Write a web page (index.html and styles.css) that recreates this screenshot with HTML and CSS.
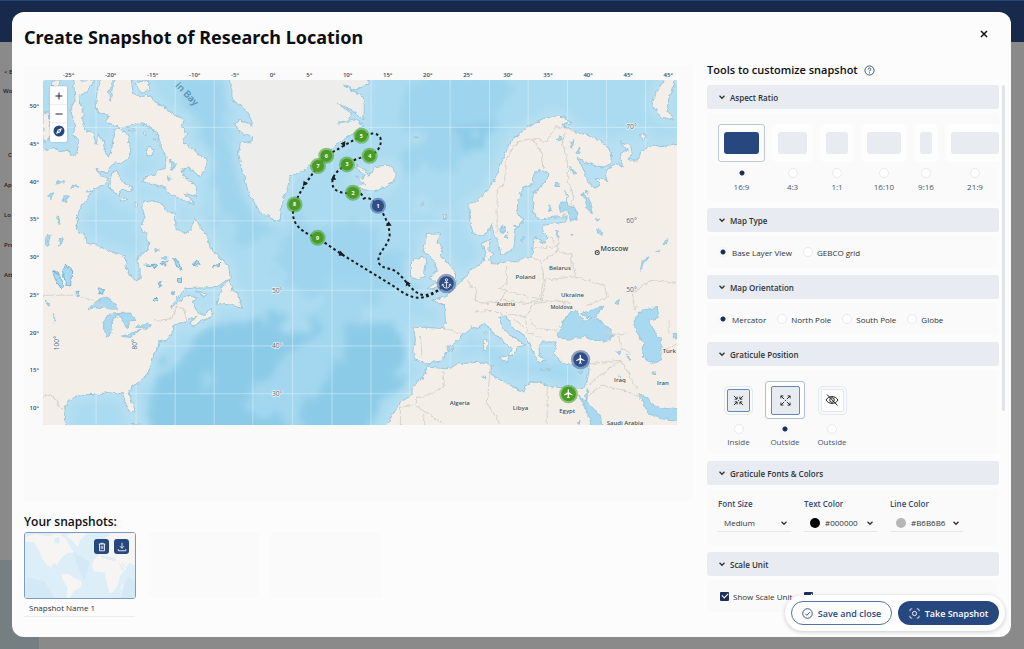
FILE: index.html
```html
<!DOCTYPE html>
<html lang="en">
<head>
<meta charset="utf-8">
<title>Create Snapshot of Research Location</title>
<link rel="stylesheet" href="styles.css">
</head>
<body>
<svg class="defs" aria-hidden="true">
  <symbol id="chev" viewBox="0 0 8 8"><path d="M1.5 2.8 4 5.3 6.500 2.800" fill="none" stroke="currentColor" stroke-width="1.300"/></symbol>
  <symbol id="plane" viewBox="0 0 24 24"><path fill="#fff" d="M21 16v-2l-8-5V3.500a1.500 1.500 0 0 0-3 0V9l-8 5v2l8-2.500V19l-2 1.500V22l3.500-1 3.500 1v-1.500L13 19v-5.500z"/></symbol>
</svg>

<div class="page">
  <header class="topbar"></header>
  <nav class="sidebar">
    <span>&lt; B</span><span>Wo</span><span class="far">C</span><span>Ap</span><span>Lo</span><span>Pro</span><span>Att</span>
  </nav>
  <div class="sidefoot"></div>
</div>

<main class="modal" role="dialog" aria-labelledby="title">
  <header class="modal-head">
    <h1 id="title">Create Snapshot of Research Location</h1>
    <button class="close" aria-label="Close"><svg viewBox="0 0 8 8"><path d="M1 1l6 6M7 1L1 7" stroke="#111" stroke-width="1.500"/></svg></button>
  </header>

  <div class="columns">
    <section class="left">
      <div class="stage">
        <div class="lon"><span>-25°</span><span>-20°</span><span>-15°</span><span>-10°</span><span>-5°</span><span>0°</span><span>5°</span><span>10°</span><span>15°</span><span>20°</span><span>25°</span><span>30°</span><span>35°</span><span>40°</span><span>45°</span><span>45°</span></div>
        <div class="lat"><span>50°</span><span>45°</span><span>40°</span><span>35°</span><span>30°</span><span>25°</span><span>20°</span><span>15°</span><span>10°</span></div>
        <div class="map">
          <svg class="chart" viewBox="9 30 1900 1035" role="img" aria-label="Map of the North Atlantic with the cruise track">
            <defs>
              <filter id="rough" x="-5%" y="-5%" width="110%" height="110%"><feTurbulence type="fractalNoise" baseFrequency="0.07" numOctaves="2" seed="4"/><feDisplacementMap in="SourceGraphic" scale="14" xChannelSelector="R" yChannelSelector="G"/></filter>
              <filter id="soft" x="-20%" y="-20%" width="140%" height="140%"><feGaussianBlur stdDeviation="14"/></filter>
              <filter id="deep" x="-20%" y="-20%" width="140%" height="140%"><feTurbulence type="fractalNoise" baseFrequency="0.012" numOctaves="4" seed="9"/><feDisplacementMap in="SourceGraphic" scale="130" xChannelSelector="R" yChannelSelector="G"/><feGaussianBlur stdDeviation="11"/></filter>
              <g id="land">
                <path d="M9 240 40 232 60 245 85 240 90 255 105 258 112 240 118 215 100 195 105 160 90 120 105 90 100 30H165L140 68 120 75 118 100 130 110 128 150 140 185 160 190 168 222 175 195 190 215 195 245 205 260 215 235 222 180 235 175 250 182 268 195 265 215 272 240 265 265 240 282 225 275 212 290 202 310 168 298 185 318 205 325 190 345 165 355 150 368 145 385 125 405 112 440 112 480 135 495 137 518 170 525 215 545 255 557 260 600 275 620 290 635 300 625 300 600 290 570 300 555 322 540 326 520 318 490 303 475 305 460 315 440 305 410 310 390 340 395 360 395 385 425 405 430 408 475 435 490 450 480 465 445 485 475 500 495 510 530 545 570 565 585 570 625 545 640 530 652 440 655 420 672 400 700 393 715 420 690 445 675 470 680 460 695 470 725 490 733 515 715 518 725 505 745 480 755 460 770 450 760 470 738 440 752 415 760 400 765 395 790 380 810 355 815 355 830 340 855 335 880 325 905 310 925 275 950 268 975 278 1000 285 1020 270 1030 257 1000 253 985 245 965 225 970 200 965 175 975 150 972 110 978 85 990 75 1010 78 1075H-5V240Z"/>
                <path d="M9 125 28 130 32 195 20 215 9 212ZM35 30H60L55 60 40 70Z"/>
                <path d="M190 20 172 55 168 90 170 125 205 140 192 155 225 165 240 175 300 160 320 165 340 180 360 205 360 230 378 255 375 295 355 300 345 315 315 320 308 335 345 343 375 355 395 375 440 395 465 405 435 370 470 380 468 350 420 305 445 290 480 322 500 285 500 265 475 255 460 240 430 215 440 190 425 170 432 150 415 140 390 125 370 110 345 95 325 75 300 80 280 70 272 20H228L218 50 210 95 206 70 222 20Z"/>
                <path d="M284 38 325 30 330 62 300 66ZM215 310 230 300 245 335 280 355 265 362 245 360 235 375 205 350ZM240 395 252 383 262 385 250 396ZM284 396H292V410H286ZM318 240 330 228 342 240 335 257 322 256ZM268 177H285V182H268ZM310 185H318V195H310ZM340 205 358 208 350 215Z"/>
                <path d="M528 700 545 650 568 630 575 660 595 670 605 715 580 705ZM468 662 500 672 490 678Z"/>
                <path d="M945 320 970 325 975 310 945 295 950 285 975 300 985 318 1005 290 1040 285 1055 290 1067 315 1055 340 1035 350 1005 365 970 358 950 353 972 340Z"/>
                <path d="M1160 490 1198 488 1190 515 1206 530 1200 555 1225 580 1245 610 1246 632 1232 645 1200 652 1160 658 1190 635 1168 625 1190 600 1180 570 1165 555 1148 545ZM1110 620 1110 580 1125 565 1145 558 1158 570 1152 615 1130 628ZM1142 399H1150V407H1142ZM1120 202 1135 200 1125 206ZM1210 435H1216V445H1210Z"/>
                <path d="M1875 20 1840 80 1837 110 1860 140 1900 150 1880 120 1885 80 1900 45 1905 20ZM1798 200 1808 190 1817 200 1808 212Z"/>
                <path d="M1285 400 1305 395 1345 360 1370 310 1390 260 1410 215 1450 180 1500 150 1540 138 1570 140 1590 158 1565 165 1590 180 1640 195 1690 220 1713 250 1710 280 1680 293 1630 275 1610 262 1625 290 1638 320 1640 335 1665 355 1678 345 1665 325 1690 325 1700 335 1695 315 1700 295 1725 280 1745 290 1740 250 1760 240 1740 215 1770 225 1775 250 1760 270 1790 270 1805 240 1840 225 1860 230 1930 215V1085H1030L1055 1035 1080 995 1115 975 1115 950 1150 920 1160 890 1220 895 1255 880 1330 875 1355 885 1350 910 1380 930 1420 950 1450 965 1460 940 1490 932 1522 948 1565 952 1600 955 1635 950 1645 905 1645 875 1605 885 1560 875 1540 850 1545 830 1550 815 1510 815 1495 820 1497 855 1515 870 1495 880 1480 850 1465 815 1450 795 1410 765 1395 735 1375 740 1380 765 1410 795 1455 825 1430 830 1425 850 1405 860 1415 835 1390 815 1355 785 1335 760 1310 775 1295 770 1250 810 1225 830 1205 872 1180 875 1160 885 1150 875 1125 870 1117 840 1125 810 1120 775 1140 770 1210 775 1215 755 1212 705 1175 690 1215 680 1240 655 1260 635 1280 615 1290 600 1325 580 1335 555 1325 520 1350 505 1345 540 1360 550 1345 570 1360 582 1395 575 1425 575 1460 562 1475 565 1477 540 1478 520 1485 500 1510 520 1525 500 1508 488 1507 480 1510 465 1575 455 1580 440 1550 440 1495 447 1480 430 1478 385 1485 365 1522 325 1525 310 1500 300 1480 310 1478 340 1450 350 1432 390 1430 430 1450 450 1425 480 1420 535 1395 553 1380 550 1375 520 1360 490 1352 460 1345 480 1320 497 1298 490 1288 455Z"/>
                <path d="M1375 860 1405 857 1400 878ZM1328 810H1342V838H1330ZM1330 788 1338 780V800ZM1500 895H1528V899H1500ZM1610 905 1628 900 1620 908ZM1225 840 1240 832 1235 840ZM1440 510 1450 500 1445 518ZM270 1062 300 1060 300 1066Z"/>
              </g>
              <path id="greenland" d="M563 20 575 50 575 90 600 105 625 130 637 165 600 150 585 162 600 190 637 200 635 212 600 220 595 250 605 300 615 330 625 370 650 410 662 432 690 440 705 455 720 448 725 400 740 360 750 320 790 300 815 285 840 265 870 240 900 215 940 190 972 165 945 150 890 160 925 148 935 130 890 100 935 120 970 150 972 110 968 80 910 45 945 60 985 42V20Z"/>
            </defs>
            <rect x="0" y="0" width="1920" height="1080" fill="#abdbf0"/>
            <g filter="url(#deep)">
              <path fill="#9ed4ed" d="M400 30H560L590 240 700 480 600 520 530 430 510 260ZM1090 30H1420L1290 260 1240 300 1080 330ZM730 480 900 430 1110 560 1100 640 950 700 700 640Z"/>
              <path fill="#8ccbe7" d="M390 860 520 800 600 740 760 760 860 720 1000 760 1110 800 1080 930 960 1120H340L320 1000ZM1230 160H1360L1300 270Z"/>
              <path fill="#a3d7ef" d="M760 1080 900 860 960 650 900 640 760 850 620 1000ZM480 920 530 900 520 980Z"/>
              <path fill="#8ccbe7" d="M970 920 1080 830 1090 900 970 1010Z"/>
            </g>
            <g fill="none" stroke="#b9e0f2" stroke-width="34" stroke-linejoin="round" filter="url(#soft)"><use href="#land"/><use href="#greenland"/></g>
            <g fill="#a6d9f1" filter="url(#soft)"><path d="M1270 800 1420 860 1490 920 1620 930 1600 890 1500 870 1380 900Z"/></g>
            <path d="M168 30V1065M288 30V1065M405 30V1065M522 30V1065M638 30V1065M757 30V1065M875 30V1065M992 30V1065M1108 30V1065M1229 30V1065M1347 30V1065M1463 30V1065M1581 30V1065M1698 30V1065M1815 30V1065M9 172H1909M9 452H1909M9 660H1909M9 827H1909M9 970H1909" fill="none" stroke="#e2f4fc" stroke-opacity=".6" stroke-width="2.500"/>
            <g filter="url(#rough)" stroke="#9cc8dc" stroke-width="3" stroke-linejoin="round">
              <g fill="#f3efe8"><use href="#land"/></g>
              <use href="#greenland" fill="#edeeec"/>
              <g fill="#a8d9f0">
                <path d="M1550 795 1565 760 1590 725 1605 720 1630 750 1670 745 1700 770 1718 795 1700 812 1660 810 1630 798 1580 810 1555 802ZM1622 730 1690 708 1662 742 1640 742Z"/>
                <path d="M1780 750 1805 720 1850 712 1855 740 1825 750 1845 790 1862 810 1860 870 1830 878 1805 860 1810 820 1785 780Z"/>
                <path d="M1612 975 1645 1000 1680 1040 1685 1080H1660L1635 1010ZM1635 970 1642 955 1638 1000ZM1795 970 1820 980 1835 1005 1880 1015 1925 1010V1050L1860 1045 1825 1030 1810 1005Z"/>
                <path d="M145 715 180 685 200 680 230 705 232 720 190 712ZM195 790 192 750 205 732 235 730 215 755 212 790 200 800ZM235 730 270 728 290 750 265 752 262 778 245 745ZM245 798 300 780 270 802ZM285 770 330 760 325 775Z"/>
                <path stroke="#7fb4cf" d="M78 585 95 600 92 650 80 645 65 600ZM38 600 55 610 70 650 60 652 42 620ZM177 657 190 655 188 672 178 668ZM105 668 120 665 115 678ZM315 585 345 582 355 592 320 592ZM360 580 385 572 375 585ZM400 565 420 578 425 600 410 590ZM457 582 470 570 480 585ZM355 640 365 635 360 652ZM340 685H352V692H340ZM520 590 540 578 535 590ZM395 665H402V672H395ZM412 625H424V640H412Z"/>
                <path d="M388 268 408 280 395 302ZM382 315 395 325 385 335ZM24 375 40 368 35 388ZM50 335H72V339H50ZM95 345 120 350 95 352ZM140 362 158 363 140 366ZM70 380H82V390H70ZM55 435 60 460 52 455ZM20 490 30 500 22 528 15 520ZM62 505 70 510 55 528ZM40 730 46 750 42 755ZM345 535 355 540 345 542ZM365 560H380V566H365ZM15 690 32 702 28 706Z"/>
                <path d="M1548 208 1560 195 1565 210 1552 212ZM1588 215 1600 212 1595 235ZM1605 250 1618 235 1615 250ZM1588 290 1608 310 1600 312ZM1580 415 1600 410 1612 430 1605 448 1590 450ZM1555 405 1575 395 1580 380 1582 415 1560 428ZM1545 340H1555V346H1545ZM1525 405H1531V424H1525ZM1572 365 1582 380ZM1632 375 1645 385 1655 430 1640 420ZM1622 368H1630V374H1622ZM1635 358 1645 368 1635 370ZM1668 475 1680 480 1685 495 1672 490ZM1378 480 1390 465 1395 480 1382 492ZM1420 465 1438 467 1425 472ZM1395 500 1402 485 1398 505ZM1548 478 1556 500 1550 502ZM1592 490H1600V494H1592ZM1668 446H1676V452H1668ZM1800 600 1805 570 1825 560 1810 580ZM1845 545 1858 542 1855 548ZM1865 520 1882 508 1878 520ZM1722 698 1740 685 1730 702ZM1728 845 1740 842 1738 852ZM1760 850 1768 870 1760 865ZM1835 905H1842V913H1835ZM1735 910 1740 922ZM1898 790 1909 790V802L1898 800ZM1325 918H1333V922H1325ZM1610 1060 1618 1050 1616 1065Z"/>
              </g>
            </g>
            <g fill="none" stroke="#d6d3cc" stroke-width="3" filter="url(#rough)">
              <path d="M9 675H105L140 685 235 725M345 752 395 745 410 708 430 715 440 750M9 980 35 973 60 1010 78 1026"/>
              <path d="M1370 490 1370 360 1392 340 1395 270 1430 215 1475 205 1505 250 1510 295M1475 205 1520 215 1545 170 1580 175 1565 215 1580 270 1582 330 1600 380 1565 445M1580 175 1595 185M1480 535 1550 530 1555 500M1555 545 1590 550 1592 590M1510 570 1555 540 1530 500M1395 585 1400 640 1375 655 1410 665 1460 680 1500 685 1510 620 1500 570 1480 565M1500 630 1605 620 1590 550M1605 620 1690 645 1700 680 1640 705M1515 630 1505 690 1460 700 1380 690M1300 690 1340 700 1380 690 1400 660M1300 725 1355 720 1395 735M1300 690 1310 660 1275 630M1210 775 1260 790M1140 795 1145 860M1400 730 1455 740 1480 700 1560 690 1590 720M1455 740 1460 790 1500 800M1470 750 1490 775 1550 780M1420 745 1450 770M1590 700 1560 690M1690 785 1735 795 1760 790M1735 800 1740 830 1770 850M1785 720 1775 670 1830 630 1909 640M1885 750V790M1860 850 1909 820M1645 880 1740 870 1770 920 1790 960M1645 940 1740 870M1640 980 1680 945 1750 960 1800 980M1520 950V1065M1350 885 1340 1000 1380 1060M1205 885 1212 950 1160 975 1125 985M1125 1005 1080 1010V1065M1125 1005 1230 1075M1150 1030V1065M1125 985V1005"/>
            </g>
            <path fill="none" stroke="#1c1c1c" stroke-width="6" stroke-dasharray="8 8" d="M1218 640C1190 660 1180 672 1150 675 1110 668 1095 620 1060 600 1035 590 1010 595 1015 560 1025 535 1048 520 1048 490 1045 460 1030 430 1013 407 1000 390 985 380 970 385 965 370 955 360 938 368 910 372 880 365 877 345 872 320 890 300 920 283 940 268 960 262 988 257 1015 245 1025 225 1020 203 1010 185 990 190 963 197L858 257 833 288C800 335 780 360 763 403 750 440 760 480 832 503L905 553 1060 648C1110 685 1150 705 1218 640"/>
            <path fill="#1c1c1c" d="M899 541 914 556 895 557ZM790 332 788 348 803 341ZM1045 453 1036 467 1054 467ZM879 315 872 330 888 329ZM915 213 901 220 914 230ZM1098 632 1096 648 1111 640Z"/>
            <g class="place">
              <text x="1455" y="626" text-anchor="middle">Poland</text><text x="1558" y="599" text-anchor="middle">Belarus</text><text x="1596" y="680" text-anchor="middle">Ukraine</text>
              <text x="1396" y="708" text-anchor="middle" class="small">Austria</text><text x="1563" y="716" text-anchor="middle" class="small">Moldova</text>
              <text x="1738" y="936" text-anchor="middle">Iraq</text><text x="1867" y="944" text-anchor="middle">Iran</text><text x="1866" y="848">Turk</text>
              <text x="1258" y="1004" text-anchor="middle">Algeria</text><text x="1440" y="1018" text-anchor="middle">Libya</text><text x="1580" y="1027" text-anchor="middle">Egypt</text><text x="1753" y="1063" text-anchor="middle">Saudi Arabia</text>
              <text x="1680" y="541" class="city">Moscow</text>
            </g>
            <circle cx="1670" cy="547" r="6" fill="#fff" stroke="#444" stroke-width="3"/><circle cx="1670" cy="547" r="2.500" fill="#444"/>
            <g class="deg"><text x="1757" y="178">70°</text><text x="1757" y="460">60°</text><text x="1757" y="666">50°</text><text x="695" y="667">50°</text><text x="695" y="834">40°</text><text x="695" y="977">30°</text><text transform="translate(58 840) rotate(-90)">100°</text><text transform="translate(292 838) rotate(-90)">80°</text></g>
            <text class="bay" transform="translate(404 48) rotate(46)">in Bay</text>
            <g class="stops">
              <g class="halo"><circle cx="938" cy="368" r="24"/><circle cx="920" cy="283" r="24"/><circle cx="988" cy="257" r="24"/><circle cx="963" cy="197" r="24"/><circle cx="858" cy="257" r="24"/><circle cx="833" cy="288" r="24"/><circle cx="763" cy="403" r="24"/><circle cx="832" cy="503" r="24"/><circle cx="1584" cy="971" r="28"/></g>
              <g class="core"><circle cx="938" cy="368" r="18"/><circle cx="920" cy="283" r="18"/><circle cx="988" cy="257" r="18"/><circle cx="963" cy="197" r="18"/><circle cx="858" cy="257" r="18"/><circle cx="833" cy="288" r="18"/><circle cx="763" cy="403" r="18"/><circle cx="832" cy="503" r="18"/><circle cx="1584" cy="971" r="22"/></g>
              <g class="halo navy"><circle cx="1013" cy="407" r="24"/><circle cx="1218" cy="640" r="29"/><circle cx="1620" cy="868" r="29"/></g>
              <g class="core navy"><circle cx="1013" cy="407" r="18"/><circle cx="1218" cy="640" r="22"/><circle cx="1620" cy="868" r="22"/></g>
              <g class="num"><text x="1013" y="413">1</text><text x="938" y="374">2</text><text x="920" y="289">3</text><text x="988" y="263">4</text><text x="963" y="203">5</text><text x="858" y="263">6</text><text x="833" y="294">7</text><text x="763" y="409">8</text><text x="832" y="509">9</text></g>
              <use href="#plane" x="1604" y="851" width="32" height="32"/><use href="#plane" x="1568" y="954" width="32" height="32"/>
              <path d="M1218 632V652M1212 637H1224M1207 643C1207 657 1229 657 1229 643M1204 646 1207 641 1211 646M1225 646 1229 641 1232 646" fill="none" stroke="#fff" stroke-width="2.500"/><circle cx="1218" cy="629" r="3.500" fill="none" stroke="#fff" stroke-width="2.500"/>
            </g>
          </svg>
          <div class="zoomer">
            <button aria-label="Zoom in"><svg viewBox="0 0 8 8"><path d="M4 .5V7.500M.5 4H7.500"/></svg></button>
            <button aria-label="Zoom out"><svg viewBox="0 0 8 8"><path d="M.5 4H7.500"/></svg></button>
            <button aria-label="Reset north"><svg class="compass" viewBox="0 0 12 12"><circle cx="6" cy="6" r="5.500"/><path d="M9 3 7.300 7.300 3 9 4.700 4.700Z"/><circle class="dot" cx="6" cy="6" r=".8"/></svg></button>
          </div>
        </div>
      </div>

      <h2 class="snaps-title">Your snapshots:</h2>
      <div class="snaps">
        <div class="snap">
          <div class="thumb">
            <svg class="world" viewBox="0 0 112 67" preserveAspectRatio="none">
              <rect width="112" height="67" fill="#dceef7"/>
              <path fill="#d3e9f5" d="M2 45 20 50 30 67H0ZM50 20 66 30 60 50 52 30ZM104 45 112 50V67H98Z"/>
              <path fill="#f6f5f3" stroke="#e4ecef" stroke-width=".4" d="M0 4 10 1 24 3 34 0 42 6 46 14 50 20 43 21 37 26 34 31 33 34 29 31 27 35 31 38 35 40 38 42 45 42 50 46 58 50 57 56 50 60 46 67H42L43 56 38 48 37 41 30 38 22 33 17 26 14 18 9 10 0 9ZM40 2 52 0H64L56 8 54 15 48 8ZM70 27 75 23 72 17 78 14 79 8 88 0H112V34L106 31 103 36 99 30 100 34 104 36 97 44 95 53 90 61 86 62 82 47 81 41 70 40 68 33ZM73 9 77 7 76 14 72 15ZM98 53 100 50 99 59 97 58Z"/>
              <path fill="#dceef7" d="M78 22 84 24 92 26 92 29 84 27 77 25ZM93 19 98 19 98 22 92 21ZM30 6 35 4 35 11 30 10ZM95 29 101 38 99 39Z"/>
            </svg>
            <div class="thumb-actions">
              <button aria-label="Delete snapshot"><svg viewBox="0 0 12 12"><path d="M2 2.500H10M4.500 2.500V1.500H7.500V2.500M3 2.500V10.500H9V2.500M5 4.500V8.500M7 4.500V8.500"/></svg></button>
              <button aria-label="Download snapshot"><svg viewBox="0 0 12 12"><path d="M6 1V7.500M3.500 5 6 7.500 8.500 5M1.500 8.500V10.500H10.500V8.500"/></svg></button>
            </div>
          </div>
          <input class="snap-name" aria-label="Snapshot name" value="Snapshot Name 1">
        </div>
        <div class="slot"></div>
        <div class="slot"></div>
      </div>
    </section>

    <section class="right">
      <h2 class="tools-title">Tools to customize snapshot
        <svg viewBox="0 0 12 12"><circle cx="6" cy="6" r="5"/><path d="M4.500 4.800C4.500 2.700 7.500 2.800 7.500 4.600 7.500 5.700 6 5.700 6 7M6 8V9"/></svg>
      </h2>
      <div class="scroller">
        <div class="groups">
          <section>
            <button class="acc"><svg><use href="#chev"/></svg>Aspect Ratio</button>
            <div class="body ratios">
              <label class="ratio on"><span class="tile"><i class="r169"></i></span><input type="radio" name="ratio" checked>16:9</label>
              <label class="ratio"><span class="tile"><i class="r43"></i></span><input type="radio" name="ratio">4:3</label>
              <label class="ratio"><span class="tile"><i class="r11"></i></span><input type="radio" name="ratio">1:1</label>
              <label class="ratio"><span class="tile"><i class="r1610"></i></span><input type="radio" name="ratio">16:10</label>
              <label class="ratio"><span class="tile"><i class="r916"></i></span><input type="radio" name="ratio">9:16</label>
              <label class="ratio"><span class="tile"><i class="r219"></i></span><input type="radio" name="ratio">21:9</label>
            </div>
          </section>
          <section>
            <button class="acc"><svg><use href="#chev"/></svg>Map Type</button>
            <div class="body opts">
              <label><input type="radio" name="type" checked>Base Layer View</label>
              <label><input type="radio" name="type">GEBCO grid</label>
            </div>
          </section>
          <section>
            <button class="acc"><svg><use href="#chev"/></svg>Map Orientation</button>
            <div class="body opts">
              <label><input type="radio" name="orient" checked>Mercator</label>
              <label><input type="radio" name="orient">North Pole</label>
              <label><input type="radio" name="orient">South Pole</label>
              <label><input type="radio" name="orient">Globe</label>
            </div>
          </section>
          <section>
            <button class="acc"><svg><use href="#chev"/></svg>Graticule Position</button>
            <div class="body positions">
              <label class="pos inside"><span class="ptile"><span class="pbox"><svg viewBox="0 0 12 12"><path d="M1 1 4.300 4.300M4.500 1.800V4.500H1.800M11 1 7.700 4.300M7.500 1.800V4.500H10.200M1 11 4.300 7.700M1.800 7.500H4.500V10.200M11 11 7.700 7.700M10.200 7.500H7.500V10.200M5.500 6H6.500"/></svg></span></span><input type="radio" name="pos">Inside</label>
              <label class="pos on"><span class="ptile"><span class="pbox"><svg viewBox="0 0 12 12"><path d="M1 1 4.500 4.500M1 3.700V1H3.700M11 1 7.500 4.500M8.300 1H11V3.700M1 11 4.500 7.500M1 8.300V11H3.700M11 11 7.500 7.500M8.300 11H11V8.300M5.500 6H6.500"/></svg></span></span><input type="radio" name="pos" checked>Outside</label>
              <label class="pos none"><span class="ptile"><span class="pbox"><svg class="eye" viewBox="0 0 14 12"><path d="M1 6C3.500 1.500 10.500 1.500 13 6 10.500 10.500 3.500 10.500 1 6ZM2 .5 12.500 11.500"/><circle cx="7" cy="6" r="2.300"/></svg></span></span><input type="radio" name="pos">Outside</label>
            </div>
          </section>
          <section>
            <button class="acc"><svg><use href="#chev"/></svg>Graticule Fonts &amp; Colors</button>
            <div class="body fields">
              <div class="field"><label for="fs">Font Size</label><div class="control"><select id="fs"><option>Medium</option></select><svg><use href="#chev"/></svg></div></div>
              <div class="field"><label for="tc">Text Color</label><div class="control"><b class="black"></b><select id="tc"><option>#000000</option></select><svg><use href="#chev"/></svg></div></div>
              <div class="field"><label for="lc">Line Color</label><div class="control"><b class="grey"></b><select id="lc"><option>#B6B6B6</option></select><svg><use href="#chev"/></svg></div></div>
            </div>
          </section>
          <section>
            <button class="acc"><svg><use href="#chev"/></svg>Scale Unit</button>
            <div class="body checks">
              <label><input type="checkbox" checked>Show Scale Unit</label>
              <label><input type="checkbox" checked>Include north symbol</label>
            </div>
          </section>
        </div>
        <div class="bar"></div>
      </div>
    </section>
  </div>

  <footer class="actions">
    <button class="ghost"><svg viewBox="0 0 12 12"><circle cx="6" cy="6" r="5.200"/><path d="M3.500 6.200 5.300 8 8.700 4.500"/></svg>Save and close</button>
    <button class="solid"><svg viewBox="0 0 12 12"><path d="M1 3.500V2.500Q1 1 2.500 1H3.500M8.500 1H9.500Q11 1 11 2.500V3.500M11 8.500V9.500Q11 11 9.500 11H8.500M3.500 11H2.500Q1 11 1 9.500V8.500"/><circle cx="6" cy="6" r="2.300"/></svg>Take Snapshot</button>
  </footer>
</main>
</body>
</html>
```
FILE: styles.css
```css
* { box-sizing: border-box; }
body {
  margin: 0;
  font-family: "Open Sans", "Noto Sans", sans-serif;
  font-size: 8px;
  color: #2c3338;
  background: #8a8a8a;
}
button, input, select { font: inherit; color: inherit; }
button { border: 0; padding: 0; background: none; }
h1, h2 { margin: 0; color: #0c0e12; }
.defs { position: absolute; width: 0; height: 0; }

/* dimmed page behind the dialog */
.page { min-height: 100vh; display: flex; flex-direction: column; overflow: hidden; }
.topbar { height: 42px; background: #172a4c; border-top: 1px solid #24477d; }
.sidebar {
  flex: 1;
  display: flex;
  flex-direction: column;
  gap: 19px;
  padding-top: 25px;
  width: 39px;
  font-size: 6px;
  line-height: 11px;
  font-weight: 600;
  color: #1b1f26;
}
.sidebar span { padding-left: 4px; }
.sidebar span:nth-child(2) { margin: -11px 0 34px -1px; }
.sidebar .far { padding-left: 8px; }
.sidefoot { width: 39px; height: 89px; background: #757e81; }

.modal {
  position: absolute;
  inset: 12px 13px 12px 12px;
  display: flex;
  flex-direction: column;
  border-radius: 12px;
  background: #fcfcfc;
  padding: 12px 6px 12px 12px;
}
.modal-head { display: flex; justify-content: space-between; align-items: flex-start; padding-right: 17px; }
h1 { font-family: "Noto Sans", "Open Sans", sans-serif; font-size: 18px; line-height: 26px; }
.close { width: 9px; height: 20px; }
.close svg { width: 8px; height: 8px; }

.columns { flex: 1; display: grid; grid-template-columns: minmax(0, 669fr) minmax(0, 298fr); gap: 14px; min-height: 0; }
.left { display: flex; flex-direction: column; padding-top: 15px; }
.stage {
  flex: 1;
  display: grid;
  grid-template: 15px auto / 19px minmax(0, 1fr);
  align-content: start;
  padding-right: 16px;
  background: #fafafa;
}
.lon, .lat { display: flex; justify-content: space-between; font-size: 6px; font-weight: 600; color: #33486a; line-height: 8px; }
.lon { grid-column: 2; padding: 6px 4px 0 20px; }
.lat { flex-direction: column; padding: 22px 4px 13px 0; text-align: right; }
.map { position: relative; }
.chart { display: block; width: 100%; height: auto; border-radius: 2px; }
.place { font-size: 18px; font-weight: 600; fill: #3d5560; paint-order: stroke; stroke: #f7f4ee; stroke-width: 3px; }
.place .small { font-size: 16px; }
.place .city { font-size: 21px; fill: #444; }
.deg { font-size: 20px; fill: #4f677b; paint-order: stroke; stroke: #eef6fa; stroke-width: 4px; }
.bay { font-size: 29px; font-weight: 600; fill: #568fae; }
.halo { fill: #4fa32a; fill-opacity: .6; }
.core { fill: #4b9c26; }
.halo.navy { fill: #4b689c; fill-opacity: .6; }
.core.navy { fill: #2e4e8a; }
.num { font-size: 16px; font-weight: 700; fill: #fff; text-anchor: middle; }

.zoomer {
  position: absolute;
  left: 7px;
  top: 6px;
  width: 17px;
  display: flex;
  flex-direction: column;
  border-radius: 2px;
  background: #fff;
  box-shadow: 0 0 2px #0003;
}
.zoomer button { height: 18px; display: grid; place-items: center; border-top: 1px solid #eceff2; }
.zoomer button:last-child { height: 20px; padding-bottom: 3px; }
.zoomer svg { width: 8px; height: 8px; stroke: #222; stroke-width: 1; fill: none; }
.zoomer .compass { width: 12px; height: 12px; stroke: none; fill: #27487f; }
.compass path { fill: #fff; }

.snaps-title { font-size: 12px; line-height: 16px; font-weight: 600; margin: 13px 0 2px; }
.snaps { display: flex; gap: 12px; align-items: flex-start; margin-bottom: 8px; }
.snap { width: 112px; }
.thumb { position: relative; height: 67px; border: 1px solid #8099c0; border-radius: 3px; overflow: hidden; }
.world { display: block; width: 100%; height: 100%; }
.thumb-actions { position: absolute; top: 6px; right: 6px; display: flex; gap: 5px; }
.thumb-actions button { width: 15px; height: 15px; border-radius: 3px; background: #27487f; display: grid; place-items: center; }
.thumb-actions svg { width: 10px; height: 10px; fill: none; stroke: #fff; stroke-width: 1; }
.snap-name { display: block; width: 111px; height: 18px; padding: 0 5px; border: 0; border-bottom: 1px solid #ececee; background: none; }
.slot { width: 111px; height: 66px; background: #fafafa; }

.tools-title { display: flex; align-items: center; gap: 6px; margin: 12px 0 7px; font-size: 11px; line-height: 16px; font-weight: 600; }
.tools-title svg { width: 11px; height: 11px; fill: none; stroke: #2a4a78; stroke-width: 1; }
.right { min-height: 0; }
.scroller { display: grid; grid-template-columns: minmax(0, 1fr) 3px; gap: 3px; height: 531px; overflow: hidden; }
.bar { height: 326px; border-radius: 2px; background: #e0e5ec; }
.acc {
  width: 100%;
  height: 24px;
  display: flex;
  align-items: center;
  gap: 4px;
  padding: 0 11px;
  border-radius: 3px;
  background: #e8ebf1;
  font-size: 8px;
  font-weight: 600;
}
.acc svg, .control svg { width: 8px; height: 8px; flex: none; }
.body { margin: 4px 0 7px; background: #fafafa; display: flex; }
input[type=radio] {
  appearance: none;
  flex: none;
  width: 10px;
  height: 10px;
  margin: 0;
  border: 1px solid #e8ebee;
  border-radius: 50%;
  background: #fff;
}
input[type=radio]:checked { border-color: #f1f3f5; background: radial-gradient(circle, #182f57 0 2px, #fff 3px); }

.ratios { gap: 7px; padding: 11px 0 8px 11px; overflow: hidden; }
.ratio, .pos { display: flex; flex-direction: column; align-items: center; flex: none; color: #465774; line-height: 12px; }
.tile { padding: 7px 5px; border: 1px solid #fcfcfd; border-radius: 3px; background: #fdfdfd; }
.tile i { display: block; height: 22px; border-radius: 3px; background: #e8ebf0; }
.on .tile { border-color: #bdc8d8; }
.on .tile i { background: #27487f; }
.r169 { width: 35px; }
.r43 { width: 29px; }
.r11 { width: 22px; }
.r1610 { width: 34px; }
.r916 { width: 12px; }
.r219 { width: 48px; }
.ratio input { margin: 6px 0 3px; }

.opts { height: 32px; align-items: center; gap: 11px; padding-left: 11px; }
.opts label { display: flex; align-items: center; gap: 4px; }

.positions { padding: 11px 0 6px 11px; }
.pos { width: 47px; }
.pos:first-child { width: 41px; }
.pos.on { width: 52px; }
.pos:last-child { width: 42px; }
.ptile { height: 38px; display: grid; place-items: center; }
.pbox { display: grid; place-items: center; width: 23px; height: 23px; border: 1px solid #6886b4; border-radius: 2px; background: #e8ebf0; outline: 1px solid #e3e9f0; outline-offset: 2px; }
.on .ptile { width: 40px; border: 1px solid #b3bfd2; border-radius: 3px; background: #fff; }
.on .pbox { width: 29px; height: 29px; outline: 0; }
.none .pbox { background: #fff; border-color: #e3e9f0; }
.pbox svg { width: 11px; height: 11px; fill: none; stroke: #222; stroke-width: 1; }
.pbox .eye { width: 14px; height: 12px; }
.pos input { margin: 5px 0 2px; }

.fields { height: 56px; padding: 9px 11px; gap: 13px; }
.field { width: 73px; }
.field label { display: block; color: #31496f; font-weight: 600; line-height: 12px; }
.control { display: flex; align-items: center; height: 18px; margin-top: 4px; padding: 0 3px 0 6px; gap: 5px; border-bottom: 1px solid #e3e7ea; }
.control select { appearance: none; flex: 1; min-width: 0; border: 0; padding: 0; background: none; }
.control b { flex: none; width: 10px; height: 10px; border-radius: 50%; }
.black { background: #000; }
.grey { background: #b6b6b6; }

.checks { height: 32px; align-items: center; gap: 12px; padding-left: 13px; }
.checks label { display: flex; align-items: center; gap: 4px; }
.checks input {
  appearance: none;
  width: 9px;
  height: 9px;
  margin: 0;
  border-radius: 1px;
  background: #1c315a;
  display: grid;
  place-items: center;
}
.checks input::before { content: ""; width: 5px; height: 3px; border: solid #fff; border-width: 0 0 1px 1px; rotate: -45deg; margin-bottom: 2px; }

.actions {
  position: absolute;
  right: 6px;
  bottom: 6px;
  display: flex;
  gap: 6px;
  padding: 6px;
  border-radius: 18px;
  background: #fff;
  box-shadow: 0 1px 4px #0003;
}
.actions button { display: flex; align-items: center; justify-content: center; gap: 5px; width: 101px; height: 24px; border-radius: 12px; font-size: 9px; font-weight: 600; }
.actions svg { width: 11px; height: 11px; fill: none; stroke: currentColor; stroke-width: 1; }
.ghost { border: 1px solid #5572a3; color: #27487f; }
.solid { background: #27487f; color: #fff; }
```
